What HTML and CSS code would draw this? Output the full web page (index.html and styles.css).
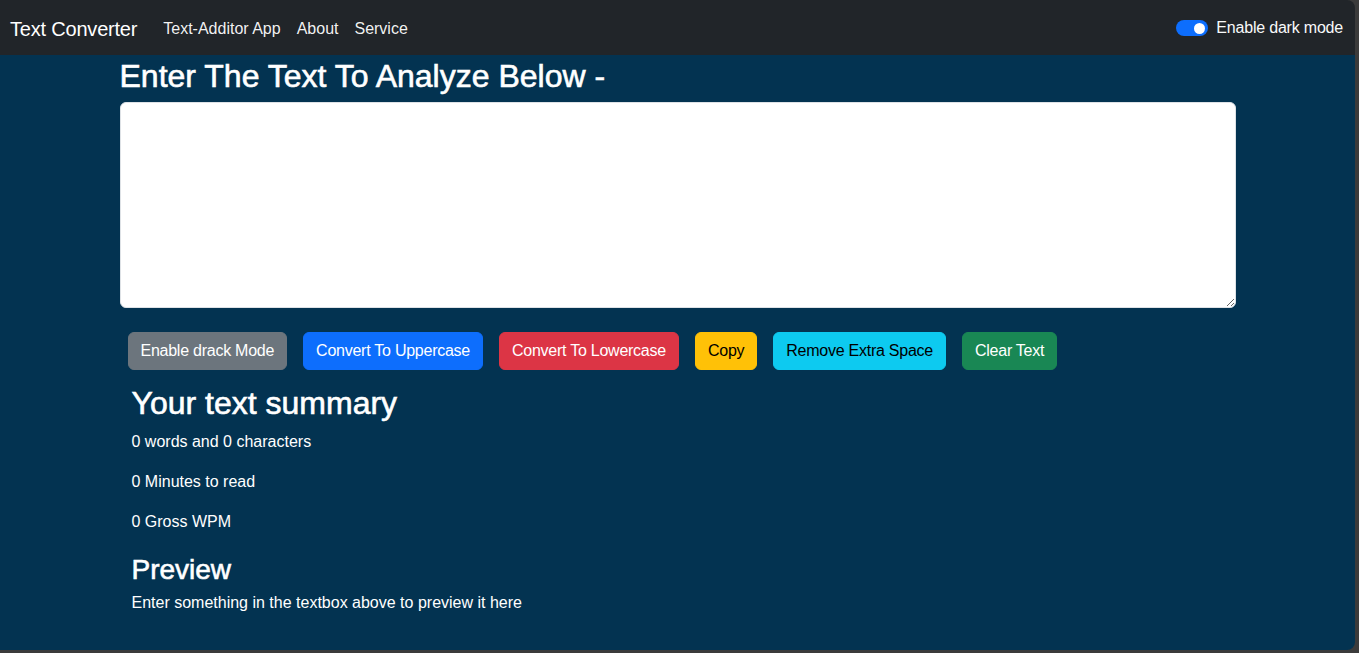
FILE: index.html
```html
<!DOCTYPE html>
<html lang="en">
<head>
<meta charset="utf-8">
<title>Text Converter</title>
<link rel="stylesheet" href="styles.css">
</head>
<body>
<div class="frame">
  <nav class="navbar">
    <a class="brand" href="#">Text Converter</a>
    <ul class="nav-links">
      <li><a href="#">Text-Additor App</a></li>
      <li><a href="#">About</a></li>
      <li><a href="#">Service</a></li>
    </ul>
    <label class="switch">
      <span class="switch-track"><span class="switch-knob"></span></span>
      <span class="switch-label">Enable dark mode</span>
    </label>
  </nav>
  <main class="main">
    <div class="container">
      <h2 class="title">Enter The Text To Analyze Below -</h2>
      <textarea class="textbox" rows="8"></textarea>
      <div class="btn-row">
        <button class="btn btn-secondary">Enable drack Mode</button>
        <button class="btn btn-primary">Convert To Uppercase</button>
        <button class="btn btn-danger">Convert To Lowercase</button>
        <button class="btn btn-warning">Copy</button>
        <button class="btn btn-info">Remove Extra Space</button>
        <button class="btn btn-success">Clear Text</button>
      </div>
      <section class="summary">
        <h2 class="summary-title">Your text summary</h2>
        <p>0 words and 0 characters</p>
        <p>0 Minutes to read</p>
        <p>0 Gross WPM</p>
        <h3 class="preview-title">Preview</h3>
        <p class="preview-text">Enter something in the textbox above to preview it here</p>
      </section>
    </div>
  </main>
</div>
</body>
</html>
```
FILE: styles.css
```css
* { box-sizing: border-box; }
html, body {
  margin: 0;
  padding: 0;
  background: #3b3b3b;
  height: 100%;
  overflow: hidden;
}
body {
  font-family: "Liberation Sans", Arial, sans-serif;
  font-size: 16px;
  line-height: 1.5;
  color: #fff;
}
.frame {
  width: 1355px;
  height: 650px;
  display: flex;
  flex-direction: column;
  border-radius: 0 8px 8px 0;
  overflow: hidden;
}
.navbar {
  height: 55px;
  flex: none;
  background: #212529;
  display: flex;
  align-items: center;
  padding: 2px 12px 0 10px;
}
.brand {
  color: #fff;
  text-decoration: none;
  font-size: 20px;
  line-height: 30px;
  letter-spacing: -0.2px;
  margin-right: 18px;
}
.nav-links {
  list-style: none;
  margin: 0;
  padding: 0;
  display: flex;
  flex: 1;
}
.nav-links a {
  display: block;
  padding: 8px 8px;
  color: rgba(255, 255, 255, 0.95);
  text-decoration: none;
  font-size: 16px;
  line-height: 24px;
}
.switch {
  display: flex;
  align-items: center;
  gap: 8px;
  margin-top: -1px;
}
.switch-track {
  width: 32px;
  height: 16px;
  border-radius: 8px;
  background: #0d6efd;
  display: flex;
  align-items: center;
  justify-content: flex-end;
  padding-right: 3px;
}
.switch-knob {
  width: 11px;
  height: 11px;
  border-radius: 50%;
  background: #fff;
}
.switch-label {
  color: #f8f9fa;
  font-size: 16px;
  letter-spacing: -0.2px;
}
.main {
  flex: 1;
  background: #033351;
  padding-top: 2px;
}
.container {
  width: 1140px;
  margin: 0 auto;
  padding: 0 12px;
}
.title, .summary-title {
  font-size: 32px;
  line-height: 1.2;
  font-weight: 400;
  -webkit-text-stroke: 0.6px #fff;
  margin: 0 0 7px;
}
.textbox {
  display: block;
  width: 100%;
  height: 206px;
  margin: 0 0 16px;
  padding: 6px 12px;
  font: inherit;
  border: 1px solid #dee2e6;
  border-radius: 6px;
  background: #fff;
  color: #212529;
}
.btn-row {
  display: flex;
  gap: 16px;
  padding: 8px;
}
.btn {
  font: inherit;
  font-size: 16px;
  line-height: 24px;
  letter-spacing: -0.25px;
  padding: 6px 12px;
  border: 1px solid transparent;
  border-radius: 6px;
  color: #fff;
  cursor: pointer;
}
.btn-secondary { background: #6c757d; border-color: #6c757d; }
.btn-primary { background: #0d6efd; border-color: #0d6efd; }
.btn-danger { background: #dc3545; border-color: #dc3545; }
.btn-warning { background: #ffc107; border-color: #ffc107; color: #000; }
.btn-info { background: #0dcaf0; border-color: #0dcaf0; color: #000; }
.btn-success { background: #198754; border-color: #198754; }
.summary {
  padding: 0 12px;
  margin-top: 6px;
}
.summary-title {
  margin-bottom: 7px;
}
.summary p {
  margin: 0 0 16px;
}
.preview-title {
  font-size: 28px;
  line-height: 1.2;
  font-weight: 400;
  -webkit-text-stroke: 0.6px #fff;
  margin: 19px 0 5px;
}
.summary .preview-text {
  margin: 0;
}
```
